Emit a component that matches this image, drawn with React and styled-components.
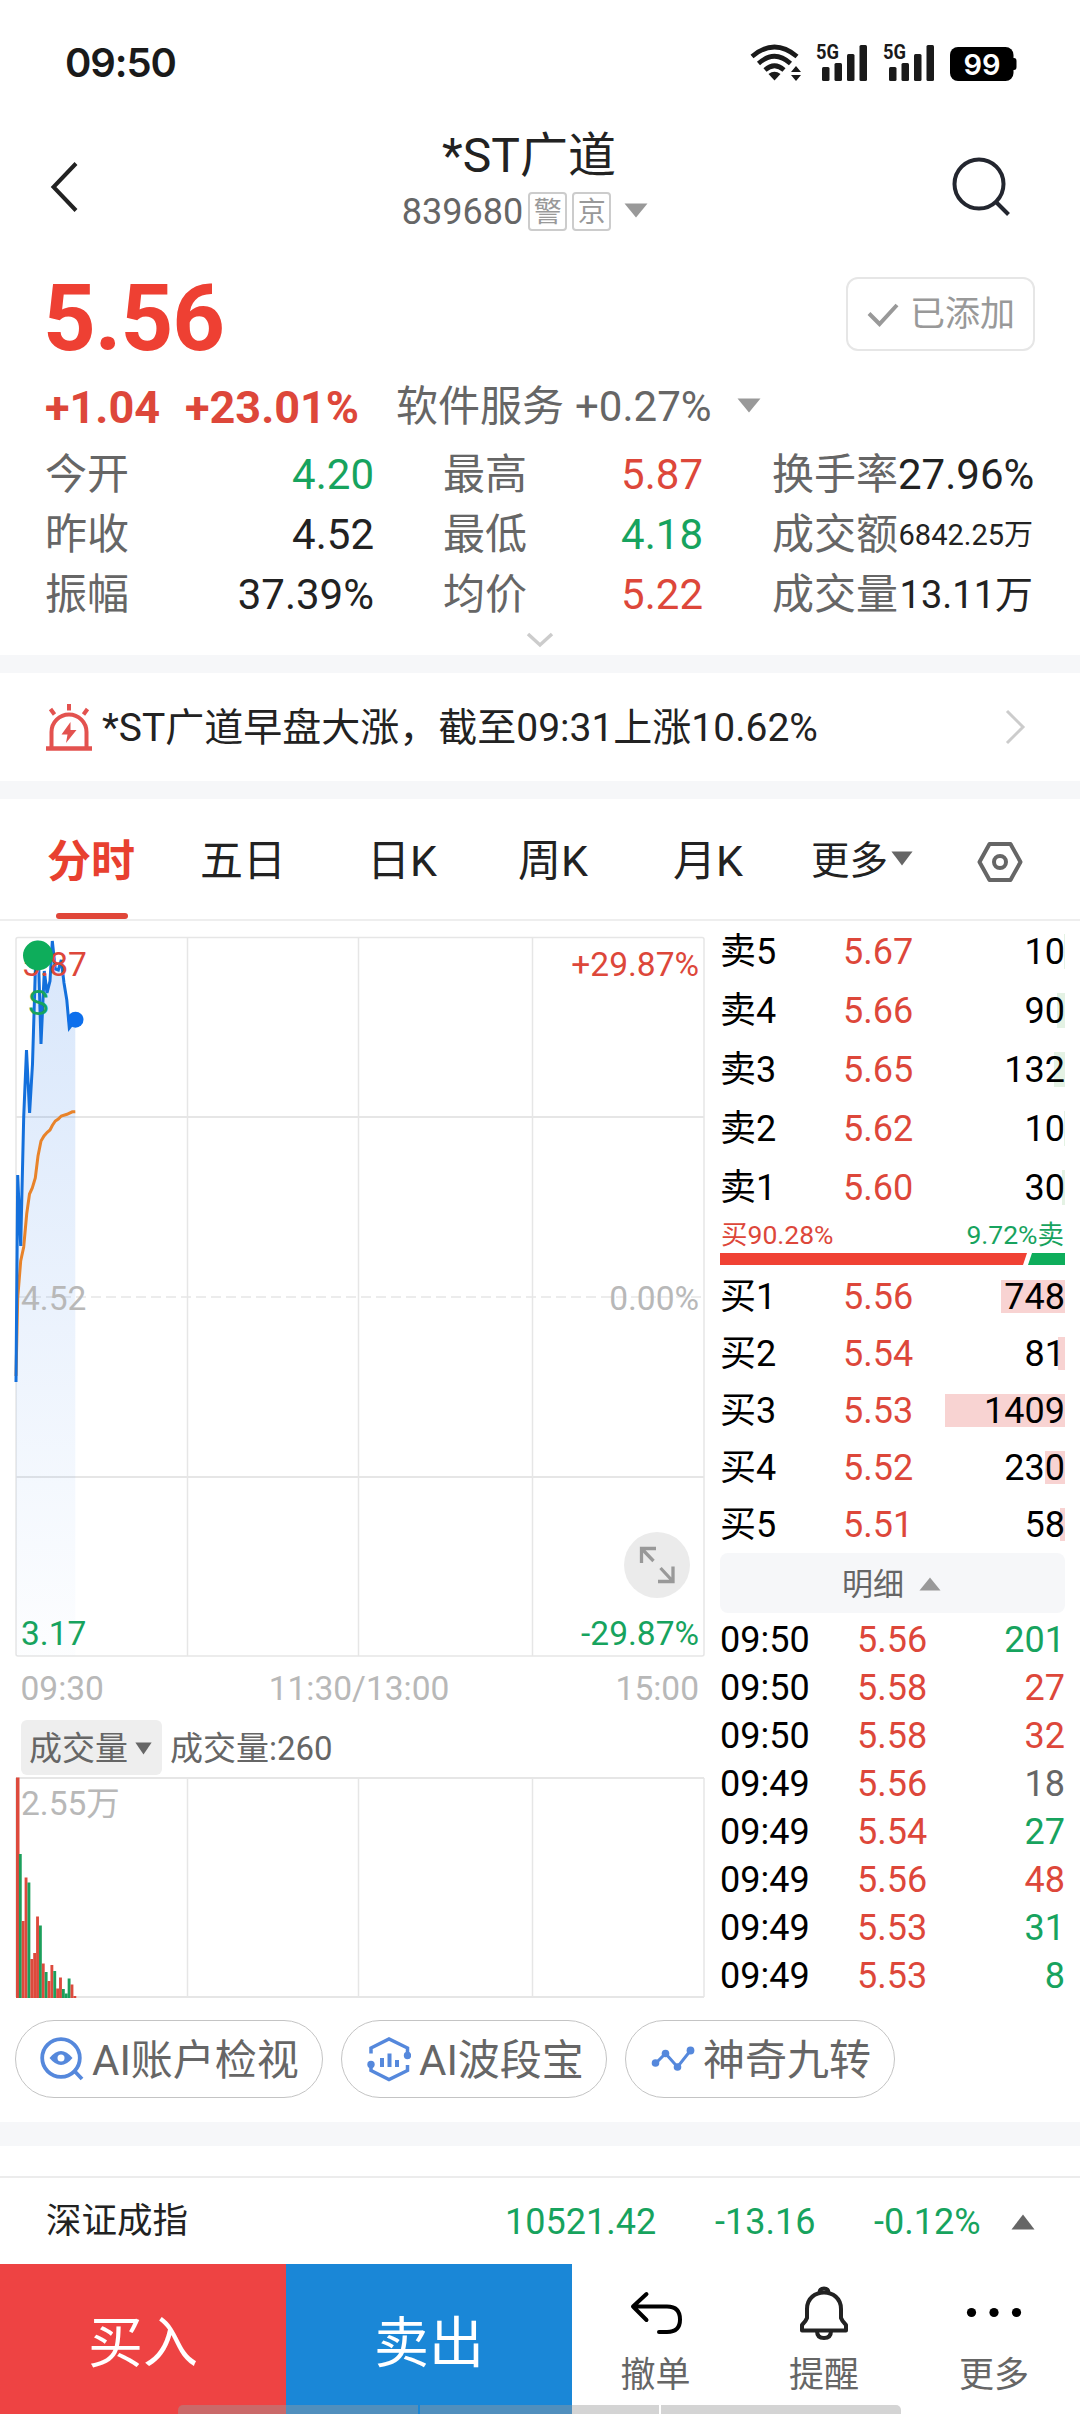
import React from 'react'
import styled, { createGlobalStyle } from 'styled-components';

const RED = '#dd473a';
const GREEN = '#17a35e';
const GREY = '#666666';

const GlobalStyle = createGlobalStyle`
    * {
        box-sizing: border-box;
    }
    body {
        margin: 0;
        background: #fff;
        font-family: Roboto, "Noto Sans CJK SC", sans-serif;
        line-height: 1;
        color: #222;
    }
    svg {
        display: block;
        flex: none;
    }
`;

const Page = styled.div`
    position: relative;
    width: 1080px;
    height: 2414px;
    overflow: hidden;
    background: #fff;
    white-space: nowrap;
`;

const Band = styled.div`
    height: ${props => props.$height}px;
    background: #f6f7f9;
`;

/* status bar */
const StatusBar = styled.div`
    height: 124px;
    padding: 0 63px 0 65px;
    display: flex;
    align-items: center;
    justify-content: space-between;
`;

const Clock = styled.div`
    padding-top: 2px;
    font-family: Inter, Roboto, sans-serif;
    font-size: 40px;
    font-weight: 600;
    letter-spacing: -1.1px;
    color: #1a1a1a;
`;

/* title */
const Header = styled.div`
    height: 126px;
    display: grid;
    grid-template-columns: 200px 1fr 226px;
`;

const HeaderSide = styled.div`
    display: flex;
    align-items: center;
    justify-content: ${props => props.$right ? 'flex-end' : 'flex-start'};
    padding: ${props => props.$right ? '0 68px 0 0' : '0 0 0 50px'};
`;

const TitleBlock = styled.div`
    display: flex;
    flex-direction: column;
    align-items: center;
`;

const Title = styled.div`
    height: 62px;
    padding-left: 4px;
    line-height: 64px;
    font-size: 48px;
`;

const CodeRow = styled.div`
    height: 52px;
    padding-right: 4px;
    display: flex;
    align-items: center;
    gap: 5px;
    font-size: 36px;
    color: ${GREY};
`;

const Badge = styled.span`
    width: 39px;
    height: 39px;
    margin-top: -2px;
    border: 2px solid #ccc;
    border-radius: 4px;
    font-size: 28px;
    line-height: 38px;
    text-align: center;
    color: #999;
`;

const ArrowSlot = styled.span`
    padding-left: ${props => props.$left}px;
    padding-bottom: ${props => props.$bottom || 0}px;
`;

/* quote */
const Quote = styled.section`
    height: 405px;
    padding: 0 45px 0 45px;
`;

const PriceRow = styled.div`
    height: 134px;
    display: flex;
    align-items: center;
    justify-content: space-between;
`;

const Price = styled.div`
    padding-top: 4px;
    font-size: 92px;
    font-weight: 700;
    letter-spacing: -1px;
    text-indent: -2px;
    color: #ee4033;
`;

const AddedButton = styled.button`
    width: 189px;
    height: 74px;
    margin: 0 0 7px;
    padding: 2px 0 0 19px;
    display: flex;
    align-items: center;
    gap: 11px;
    border: 2px solid #e6e6e6;
    border-radius: 12px;
    background: #fff;
    color: #999;
    font: inherit;
    font-size: 35px;
`;

const ChangeRow = styled.div`
    height: 44px;
    padding-top: 2px;
    display: flex;
    align-items: center;
    font-size: 42px;
    color: ${GREY};
`;

const Change = styled.span`
    width: ${props => props.$width}px;
    font-size: 45px;
    font-weight: 700;
    color: ${RED};
`;

const Industry = styled.span`
    padding-right: 11px;
`;

const Stats = styled.div`
    padding-top: 17px;
    display: grid;
    grid-template-columns: 329px 260px 261px;
    column-gap: 69px;
`;

const Stat = styled.div`
    height: 60px;
    display: flex;
    align-items: center;
    justify-content: space-between;
    font-size: 42px;
    color: ${GREY};
`;

const StatValue = styled.span`
    font-size: ${props => props.$size || 42}px;
    color: ${props => props.$color || '#222'};
`;

const Expand = styled.div`
    height: 30px;
    padding-right: 1px;
    display: flex;
    align-items: center;
    justify-content: center;
`;

/* news strip */
const Alert = styled.div`
    height: 108px;
    padding: 0 54px 0 44px;
    display: flex;
    align-items: center;
    font-size: 39px;
`;

const AlertText = styled.div`
    flex: 1;
    padding: 3px 0 0 8px;
`;

/* period tabs */
const Tabs = styled.nav`
    height: 122px;
    padding-left: 16px;
    display: grid;
    grid-template-columns: 152px 150px 168px 134px 176px 132px 144px;
    border-bottom: 2px solid #eee;
`;

const Tab = styled.div`
    position: relative;
    height: 124px;
    padding-top: 1px;
    display: flex;
    align-items: center;
    justify-content: center;
    font-size: ${props => props.$small ? 38.5 : 43}px;
    ${props => props.$active && `
        padding-right: 2px;
        font-size: 44px;
        font-weight: 700;
        color: #e8402f;
        &:after {
            content: "";
            position: absolute;
            left: 40px;
            top: 114px;
            width: 72px;
            height: 6px;
            border-radius: 3px;
            background: #e04639;
        }
    `}
`;

/* chart and order book */
const Market = styled.div`
    display: flex;
`;

const Charts = styled.div`
    width: 720px;
`;

const VolumeHeader = styled.div`
    height: 63px;
    padding: 8px 0 0 21px;
    display: flex;
    font-size: 33px;
    color: ${GREY};
`;

const VolumePicker = styled.div`
    width: 141px;
    height: 55px;
    margin-right: 8px;
    padding: 2px 0 0 8px;
    display: flex;
    align-items: center;
    gap: 7px;
    border-radius: 6px;
    background: #eee;
`;

const VolumeText = styled.div`
    line-height: 57px;
`;

const Book = styled.div`
    width: 345px;
    padding-top: 1px;
    color: #000;
    font-size: 36px;
`;

const Level = styled.div`
    position: relative;
    height: ${props => props.$bid ? 57 : 59}px;
    display: grid;
    grid-template-columns: 123px 80px 1fr;
    align-items: center;
`;

const Cell = styled.span`
    position: relative;
    text-align: ${props => props.$right ? 'right' : 'left'};
    color: ${props => props.$color || '#000'};
`;

const Depth = styled.i`
    position: absolute;
    right: 0;
    top: 12px;
    height: ${props => props.$bid ? 33 : 35}px;
    background: ${props => props.$bid ? '#f8d3d2' : '#e4f2e4'};
`;

const RatioText = styled.div`
    height: 36px;
    display: flex;
    align-items: center;
    justify-content: space-between;
    padding: 0 1px;
    font-size: 26.5px;
`;

const RatioBar = styled.div`
    height: 12px;
    margin-bottom: 3px;
    display: flex;
    justify-content: space-between;
`;

const RatioBuy = styled.div`
    width: 307px;
    background: #f04134;
    clip-path: polygon(0 0, 100% 0, calc(100% - 4px) 100%, 0 100%);
`;

const RatioSell = styled.div`
    width: 37px;
    background: #0ead5b;
    clip-path: polygon(4px 0, 100% 0, 100% 100%, 0 100%);
`;

const DetailToggle = styled.div`
    height: 60px;
    margin-bottom: 3px;
    padding: 2px 2px 0 0;
    display: flex;
    align-items: center;
    justify-content: center;
    gap: 15px;
    border-radius: 8px;
    background: #f6f7f9;
    color: ${GREY};
    font-size: 31px;
`;

const Trade = styled.div`
    height: 48px;
    display: grid;
    grid-template-columns: 137px 80px 1fr;
    align-items: center;
`;

/* tool chips */
const Chips = styled.div`
    height: 122px;
    padding: 20px 15px 0;
    display: flex;
    gap: 18px;
`;

const Chip = styled.div`
    width: ${props => props.$width}px;
    height: 78px;
    padding-left: ${props => props.$left}px;
    display: flex;
    align-items: center;
    gap: 8px;
    border: 1px solid #c4c4c4;
    border-radius: 39px;
    font-size: 42px;
    color: ${GREY};
`;

const ChipText = styled.span`
    padding-top: 3px;
`;

/* index row */
const IndexRow = styled.div`
    height: 88px;
    margin-top: 30px;
    padding: 2px 45px 0 46px;
    display: grid;
    grid-template-columns: 459px 210px 159px 1fr auto;
    align-items: center;
    border-top: 2px solid #ececec;
    font-size: 36px;
    color: ${GREEN};
`;

const IndexName = styled.span`
    font-size: 35.5px;
    color: #222;
`;

/* bottom actions */
const BottomBar = styled.div`
    height: 150px;
    display: flex;
`;

const OrderButton = styled.button`
    width: 286px;
    padding: 0;
    border: 0;
    background: ${props => props.$sell ? '#1a87d7' : '#ee4343'};
    color: #fff;
    font: inherit;
    font-size: 55px;
    line-height: 159px;
`;

const Actions = styled.div`
    flex: 1;
    display: grid;
    grid-template-columns: 167px 170px 170px;
`;

const Action = styled.div`
    display: flex;
    flex-direction: column;
    align-items: center;
    color: ${GREY};
    font-size: 35px;
`;

const ActionIcon = styled.div`
    height: 94px;
    padding-top: 21px;
`;

const HomeBar = styled.div`
    position: absolute;
    left: 178px;
    bottom: 0;
    width: 723px;
    height: 9px;
    display: flex;
    gap: 2px;
    border-radius: 5px 5px 0 0;
    overflow: hidden;
`;

const HomePart = styled.div`
    flex: 1;
    background: rgba(155, 155, 155, 0.43);
`;

function Triangle({ width = 24, height = 15, color = '#999', up }) {
    return (
        <svg width={width} height={height} viewBox="0 0 24 15" preserveAspectRatio="none">
            <path d={up ? 'M12 0.5 L23.5 14.5 H0.5 Z' : 'M0.5 0.5 H23.5 L12 14.5 Z'} fill={color} />
        </svg>
    )
}

function Signal() {
    return (
        <svg width="52" height="56" viewBox="0 -8 52 56" fill="#1a1a1a">
            <text x="0" y="17" fontFamily="Roboto" fontWeight="700" fontSize="21" textLength="23" lengthAdjust="spacingAndGlyphs">5G</text>
            <rect x="6" y="25" width="7.500" height="14" rx="1.500" />
            <rect x="18.500" y="21" width="7.500" height="18" rx="1.500" />
            <rect x="31" y="12" width="7.500" height="27" rx="1.500" />
            <rect x="43.500" y="3" width="7.500" height="36" rx="1.500" />
        </svg>
    )
}

const StatusIcons = styled.div`
    display: flex;
    align-items: center;
    gap: 15px;
`;

function Wifi() {
    return (
        <svg width="51" height="40" viewBox="0 0 51 40" fill="none" stroke="#1a1a1a" strokeWidth="4.600">
            <path d="M2 14.500 Q24.500 -4.500 47 14.500" />
            <path d="M8.500 21.500 Q24.500 7 40.500 21.500" />
            <path d="M15 28 Q24.500 19.500 34 28" />
            <path d="M18.500 32 Q24.500 27.500 30.500 32 L24.500 38.500 Z" fill="#1a1a1a" stroke="none" />
            <path d="M46 24 L51 30 H41 Z M46 39 L51 33 H41 Z" fill="#1a1a1a" stroke="none" />
        </svg>
    )
}

function Battery() {
    return (
        <svg width="67" height="40" viewBox="0 0 67 40">
            <rect x="0" y="5" width="63.500" height="34" rx="8" fill="#000" />
            <path d="M63 16 H64 Q66.500 16 66.500 19 V25 Q66.500 28 64 28 H63 Z" fill="#000" />
            <text x="32" y="33" textAnchor="middle" fontFamily="Inter, Roboto" fontWeight="600" fontSize="29" fill="#fff">99</text>
        </svg>
    )
}

function AlarmIcon() {
    return (
        <svg width="50" height="50" viewBox="0 0 50 50" fill="none" stroke="#e3524f" strokeWidth="4">
            <path d="M7.500 45 V30 A17.500 17.500 0 0 1 42.500 30 V45" />
            <path d="M2 46.500 H48" strokeWidth="4.500" />
            <path d="M25 2 V8.500 M6.500 7 L10.500 12.500 M43.500 7 L39.500 12.500" />
            <path d="M26.500 20 L17.500 32.500 H23.500 L22 41 L32.500 28 H26.500 Z" fill="#e3524f" stroke="none" />
        </svg>
    )
}

const stats = [
    ['今开', '4.20', GREEN], ['最高', '5.87', RED], ['换手率', '27.96%', null],
    ['昨收', '4.52', null], ['最低', '4.18', GREEN], ['成交额', '6842.25万', null, 29],
    ['振幅', '37.39%', null], ['均价', '5.22', RED], ['成交量', '13.11万', null, 38],
];

const asks = [
    ['卖5', '5.67', 10],
    ['卖4', '5.66', 90],
    ['卖3', '5.65', 132],
    ['卖2', '5.62', 10],
    ['卖1', '5.60', 30],
];

const bids = [
    ['买1', '5.56', 748],
    ['买2', '5.54', 81],
    ['买3', '5.53', 1409],
    ['买4', '5.52', 230],
    ['买5', '5.51', 58],
];

const trades = [
    ['09:50', '5.56', 201, GREEN],
    ['09:50', '5.58', 27, RED],
    ['09:50', '5.58', 32, RED],
    ['09:49', '5.56', 18, GREY],
    ['09:49', '5.54', 27, GREEN],
    ['09:49', '5.56', 48, RED],
    ['09:49', '5.53', 31, GREEN],
    ['09:49', '5.53', 8, GREEN],
];

// [height, up]
const volumes = [
    [220.5, 1], [144, 0], [77, 1], [120.500, 1], [115.500, 0], [39, 1], [45, 1],
    [81.500, 1], [72.500, 0], [34.500, 1], [26, 0], [17, 1], [33, 1], [27, 0],
    [9.500, 1], [20.500, 1], [9, 0], [4.500, 0], [19.500, 0], [13.500, 1], [2, 1],
];

const priceLine = '16,461 17.7,254 20.7,325 23.7,196 26.5,129 29.6,192 32.5,143 35.3,50 38,20 41,123 44.3,50 47,72 50,60 52.3,20 55.3,48 58.3,49 61.3,39 64,62 66.8,79 69.3,107 75.3,99';
const averageLine = '16,455 17.7,377 20.7,340 23.7,326 26.7,293 29.5,273 32.3,267 35.3,257 38,235 41,220 44,215 47,211.500 50,209 52.3,204.500 55.3,200 58.3,198 61.3,195 67,193.300 72.3,190.800 75.3,190.700';

function PriceChart() {
    return (
        <svg width="720" height="791" viewBox="0 0 720 791" fontFamily="Roboto" fontSize="33.500">
            <defs>
                <linearGradient id="area" x1="0" y1="0" x2="0" y2="1">
                    <stop offset="0" stopColor="#1a6fe8" stopOpacity="0.170" />
                    <stop offset="1" stopColor="#1a6fe8" stopOpacity="0.010" />
                </linearGradient>
            </defs>
            <g stroke="#e6e6e6" strokeWidth="1.500" fill="none">
                <rect x="16" y="16.500" width="688" height="718.500" rx="2" />
                <path d="M187.500 17 V735 M358.500 17 V735 M532.500 17 V735" />
                <path d="M16 196 H704 M16 556 H704" strokeWidth="2" />
                <path d="M16 376 H704" strokeDasharray="10 5" />
            </g>
            <polygon points={`${priceLine} 75.3,735 16,735`} fill="url(#area)" />
            <polyline points={averageLine} fill="none" stroke="#e8832a" strokeWidth="3" />
            <polyline points={priceLine} fill="none" stroke="#1470dc" strokeWidth="3" />
            <circle cx="75.500" cy="98.700" r="8" fill="#0d6fec" />
            <text x="21.500" y="54.500" fill={RED}>5.87</text>
            <circle cx="38" cy="34.500" r="15" fill="#0ead5b" />
            <text x="38.500" y="94" textAnchor="middle" fontSize="35" fill={GREEN}>S</text>
            <text x="699" y="54.500" textAnchor="end" fill={RED}>+29.87%</text>
            <text x="21" y="389" fill="#b8b8b8">4.52</text>
            <text x="699" y="389" textAnchor="end" fill="#b8b8b8">0.00%</text>
            <text x="21" y="724" fill={GREEN}>3.17</text>
            <text x="699" y="724" textAnchor="end" fill={GREEN}>-29.87%</text>
            <g fill="#b8b8b8">
                <text x="20.500" y="779">09:30</text>
                <text x="359" y="779" textAnchor="middle">11:30/13:00</text>
                <text x="699" y="779" textAnchor="end">15:00</text>
            </g>
            <circle cx="657" cy="644" r="33" fill="#ebebeb" />
            <path
                d="M656 627.500 H641.500 V642 M641.500 627.500 L653.500 640 M658 660.500 H673 V645.500 M673 660.500 L660.500 647"
                fill="none" stroke="#999" strokeWidth="3.300"
            />
        </svg>
    )
}

function VolumeChart() {
    return (
        <svg width="720" height="225" viewBox="0 0 720 225" fontFamily='Roboto, "Noto Sans CJK SC"' fontSize="33.500">
            <g stroke="#e6e6e6" strokeWidth="1.500" fill="none">
                <path d="M187.500 3 V222 M358.500 3 V222 M532.500 3 V222 M704 3 V222 M16 3 V222" />
                <path d="M16 3 H704 M16 222 H704" strokeWidth="2" />
            </g>
            {volumes.map(([height, up], index) => (
                <rect
                    key={index}
                    x={16 + index * 2.87} y={223 - height}
                    width={index === 0 ? 3.5 : 2.87} height={height}
                    fill={up ? '#dd4a3d' : '#1c9f5c'}
                />
            ))}
            <text x="21" y="40" fill="#b8b8b8">2.55万</text>
        </svg>
    )
}

function Levels({ rows, bid }) {
    return rows.map(([name, price, amount]) => (
        <Level key={name} $bid={bid}>
            <Depth $bid={bid} style={{ width: Math.max(1, amount * 120 / 1409) }} />
            <Cell>{name}</Cell>
            <Cell $color={RED}>{price}</Cell>
            <Cell $right>{amount}</Cell>
        </Level>
    ))
}

function App() {
    return (
        <Page>
            <GlobalStyle />
            <StatusBar>
                <Clock>09:50</Clock>
                <StatusIcons>
                    <Wifi />
                    <Signal />
                    <Signal />
                    <Battery />
                </StatusIcons>
            </StatusBar>

            <Header>
                <HeaderSide>
                    <svg width="30" height="52" viewBox="0 0 30 52" fill="none" stroke="#222" strokeWidth="4">
                        <path d="M26 2.500 L3.500 26 L26 49.500" />
                    </svg>
                </HeaderSide>
                <TitleBlock>
                    <Title>*ST广道</Title>
                    <CodeRow>
                        <span>839680</span>
                        <Badge>警</Badge>
                        <Badge>京</Badge>
                        <ArrowSlot $left={8} $bottom={4}><Triangle /></ArrowSlot>
                    </CodeRow>
                </TitleBlock>
                <HeaderSide $right>
                    <svg width="62" height="62" viewBox="0 0 62 62" fill="none" stroke="#23262f" strokeWidth="4">
                        <circle cx="29" cy="28" r="24.500" />
                        <path d="M46 46 L58.500 58.500" />
                    </svg>
                </HeaderSide>
            </Header>

            <Quote>
                <PriceRow>
                    <Price>5.56</Price>
                    <AddedButton>
                        <svg width="32" height="26" viewBox="0 0 32 26" fill="none" stroke="#999" strokeWidth="4">
                            <path d="M2 11.500 L12.500 22 L30 3" />
                        </svg>
                        已添加
                    </AddedButton>
                </PriceRow>
                <ChangeRow>
                    <Change $width={140}>+1.04</Change>
                    <Change $width={211}>+23.01%</Change>
                    <Industry>软件服务</Industry>
                    <span>+0.27%</span>
                    <ArrowSlot $left={25} $bottom={4}><Triangle /></ArrowSlot>
                </ChangeRow>
                <Stats>
                    {stats.map(([label, value, color, size]) => (
                        <Stat key={label}>
                            <span>{label}</span>
                            <StatValue $color={color} $size={size}>{value}</StatValue>
                        </Stat>
                    ))}
                </Stats>
                <Expand>
                    <svg width="28" height="16" viewBox="0 0 28 16" fill="none" stroke="#ccc" strokeWidth="3.500">
                        <path d="M2 2 L14 13 L26 2" />
                    </svg>
                </Expand>
            </Quote>

            <Band $height={18} />
            <Alert>
                <AlarmIcon />
                <AlertText>*ST广道早盘大涨，截至09:31上涨10.62%</AlertText>
                <svg width="21" height="36" viewBox="0 0 21 36" fill="none" stroke="#ccc" strokeWidth="3">
                    <path d="M2 2 L18 18 L2 34" />
                </svg>
            </Alert>
            <Band $height={18} />

            <Tabs>
                <Tab $active>分时</Tab>
                <Tab>五日</Tab>
                <Tab>日K</Tab>
                <Tab>周K</Tab>
                <Tab>月K</Tab>
                <Tab $small>
                    更多
                    <ArrowSlot $left={3} $bottom={6}><Triangle color={GREY} width={22} /></ArrowSlot>
                </Tab>
                <Tab>
                    <svg width="46" height="42" viewBox="0 0 46 42" fill="none" stroke="#666" strokeWidth="4">
                        <path d="M12.500 3 H33.500 L43.500 21 L33.500 39 H12.500 L2.500 21 Z" strokeLinejoin="round" />
                        <circle cx="23" cy="21" r="6" />
                    </svg>
                </Tab>
            </Tabs>

            <Market>
                <Charts>
                    <PriceChart />
                    <VolumeHeader>
                        <VolumePicker>
                            成交量
                            <Triangle width={17} height={13} color={GREY} />
                        </VolumePicker>
                        <VolumeText>成交量:260</VolumeText>
                    </VolumeHeader>
                    <VolumeChart />
                </Charts>
                <Book>
                    <Levels rows={asks} />
                    <RatioText>
                        <Cell $color={RED}>买90.28%</Cell>
                        <Cell $color={GREEN}>9.72%卖</Cell>
                    </RatioText>
                    <RatioBar>
                        <RatioBuy />
                        <RatioSell />
                    </RatioBar>
                    <Levels rows={bids} bid />
                    <DetailToggle>
                        明细
                        <Triangle width={22} height={14} up />
                    </DetailToggle>
                    {trades.map(([time, price, amount, color], index) => (
                        <Trade key={index}>
                            <Cell>{time}</Cell>
                            <Cell $color={RED}>{price}</Cell>
                            <Cell $right $color={color}>{amount}</Cell>
                        </Trade>
                    ))}
                </Book>
            </Market>

            <Chips>
                <Chip $width={308} $left={24}>
                    <svg width="44" height="44" viewBox="0 0 44 44" fill="none" stroke="#5588dc" strokeWidth="3.800">
                        <circle cx="21" cy="21" r="18.800" />
                        <path d="M33.500 33 L42 42" />
                        <path d="M9.500 21 Q21 7 32.500 21 Q21 35 9.500 21 Z" fill="#5588dc" stroke="none" />
                        <circle cx="21" cy="21" r="3.500" fill="#fff" stroke="none" />
                    </svg>
                    <ChipText>AI账户检视</ChipText>
                </Chip>
                <Chip $width={266} $left={25}>
                    <svg width="44" height="46" viewBox="0 0 44 46" fill="none" stroke="#5588dc" strokeWidth="3.500">
                        <path d="M4 17.500 V12 L22 3 L40.500 12 V20 M4 27 V34.500 L22 43.500 L40.500 34.500 V29" />
                        <path d="M15 22 V31 M22.500 17.500 V31 M30 24 V31" strokeWidth="4" />
                        <circle cx="40.500" cy="19.500" r="3.700" fill="#5588dc" stroke="none" />
                        <circle cx="4" cy="28.500" r="3.700" fill="#5588dc" stroke="none" />
                    </svg>
                    <ChipText>AI波段宝</ChipText>
                </Chip>
                <Chip $width={270} $left={25}>
                    <svg width="44" height="26" viewBox="0 0 44 26" fill="none" stroke="#5588dc" strokeWidth="3">
                        <path d="M5 17 L14.500 7.500 L26.500 21 L39.500 4.500" />
                        <g fill="#5588dc" stroke="none">
                            <circle cx="4.500" cy="17" r="3.800" />
                            <circle cx="14.500" cy="7.500" r="3.800" />
                            <circle cx="26.500" cy="21" r="3.800" />
                            <circle cx="39.500" cy="4.500" r="3.900" />
                        </g>
                    </svg>
                    <ChipText>神奇九转</ChipText>
                </Chip>
            </Chips>
            <Band $height={24} />

            <IndexRow>
                <IndexName>深证成指</IndexName>
                <span>10521.42</span>
                <span>-13.16</span>
                <span>-0.12%</span>
                <Triangle up color={GREY} height={16} />
            </IndexRow>

            <BottomBar>
                <OrderButton>买入</OrderButton>
                <OrderButton $sell>卖出</OrderButton>
                <Actions>
                    <Action>
                        <ActionIcon>
                            <svg width="54" height="56" viewBox="0 0 54 56" fill="none" stroke="#000" strokeWidth="4" strokeLinecap="round" strokeLinejoin="round">
                                <path d="M17.500 9 L4 21.500 L17.500 35 M4 21.500 H38 Q51 21.500 51 34.500 Q51 47 38 47 H30" />
                            </svg>
                        </ActionIcon>
                        撤单
                    </Action>
                    <Action>
                        <ActionIcon>
                            <svg width="50" height="56" viewBox="0 0 50 56" fill="none" stroke="#222" strokeWidth="4" strokeLinejoin="round">
                                <path d="M8 24 C8 2 42 2 42 24 V33 Q43 36 47 40 V45.500 H3 V40 Q7 36 8 33 Z" />
                                <path d="M20.500 8 Q20.500 3.500 25 3.500 Q29.500 3.500 29.500 8 M18 46 Q18 53 25 53 Q32 53 32 46" />
                            </svg>
                        </ActionIcon>
                        提醒
                    </Action>
                    <Action>
                        <ActionIcon>
                            <svg width="56" height="56" viewBox="0 0 56 56" fill="#000">
                                <circle cx="5.500" cy="27.500" r="4.600" />
                                <circle cx="28" cy="27.500" r="4.600" />
                                <circle cx="50.500" cy="27.500" r="4.600" />
                            </svg>
                        </ActionIcon>
                        更多
                    </Action>
                </Actions>
            </BottomBar>

            <HomeBar>
                <HomePart />
                <HomePart />
                <HomePart />
            </HomeBar>
        </Page>
    )
}

export default App
